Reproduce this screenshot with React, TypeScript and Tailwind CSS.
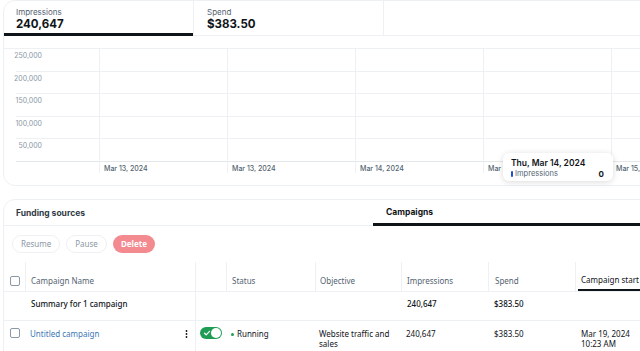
import React from "react";

const yTicks = [
  { y: 55, label: "250,000" },
  { y: 78, label: "200,000" },
  { y: 100, label: "150,000" },
  { y: 123, label: "100,000" },
  { y: 145, label: "50,000" },
];

const hLines = [71, 93, 116, 138];
const vLines = [99.5, 227.5, 355.5, 483.5, 611.5];
const xLabels = ["Mar 13, 2024", "Mar 13, 2024", "Mar 14, 2024", "Mar 14, 2024", "Mar 15, 2024"];

function Chart() {
  return (
    <svg width="700" height="149" viewBox="4 36 700 149" className="block">
      <line x1="4" y1="48.5" x2="704" y2="48.5" stroke="#eef1f3" />
      {hLines.map((y) => (
        <line key={y} x1="16" y1={y + 0.5} x2="704" y2={y + 0.5} stroke="#eef1f3" />
      ))}
      <line x1="16" y1="161.5" x2="704" y2="161.5" stroke="#e3e7ea" />
      {vLines.map((x) => (
        <line key={x} x1={x} y1="48" x2={x} y2="173" stroke="#eef1f3" />
      ))}
      {yTicks.map((t) => (
        <text
          key={t.label}
          x="42"
          y={t.y + 2.5}
          textAnchor="end"
          fontSize="7"
          fill="#8b98a5"
          fontFamily="Inter, sans-serif"
        >
          {t.label}
        </text>
      ))}
      {vLines.map((x, i) => (
        <text
          key={i}
          x={x + 4.5}
          y="171"
          fontSize="7"
          fontWeight="500"
          fill="#536471"
          fontFamily="Inter, sans-serif"
        >
          {xLabels[i]}
        </text>
      ))}
    </svg>
  );
}

function Checkbox() {
  return <span className="block w-[10px] h-[10px] rounded-[2px] border border-[#8b98a5] bg-white" />;
}

function Toggle() {
  return (
    <span className="flex items-center w-[22px] h-[12px] rounded-full bg-[#1f9d55] px-[1px] justify-between">
      <svg width="8" height="8" viewBox="0 0 8 8" className="ml-[2px]">
        <path d="M1.5 4.2 3.2 5.8 6.5 2.3" fill="none" stroke="white" strokeWidth="1.2" strokeLinecap="round" strokeLinejoin="round" />
      </svg>
      <span className="block w-[10px] h-[10px] rounded-full bg-white" />
    </span>
  );
}

function Kebab() {
  return (
    <svg width="3" height="8" viewBox="0 0 3 8">
      <circle cx="1.5" cy="1" r="0.9" fill="#0f1419" />
      <circle cx="1.5" cy="4" r="0.9" fill="#0f1419" />
      <circle cx="1.5" cy="7" r="0.9" fill="#0f1419" />
    </svg>
  );
}

export default function App() {
  return (
    <div
      className="relative w-[640px] h-[351px] overflow-hidden bg-white text-[#0f1419]"
      style={{ fontFamily: "Inter, 'Noto Sans', sans-serif" }}
    >
      {/* metrics + chart card */}
      <div className="ml-[3px] w-[700px] h-[186px] border border-[#eef1f3] rounded-xl">
        <div className="flex h-[35px] border-b border-[#eef1f3]">
          <div className="w-[189px] border-b-[3px] border-[#0f1419] pl-[12px] pt-[6px] -mb-[1px]">
            <div className="text-[8px] leading-[10px] text-[#536471]">Impressions</div>
            <div className="text-[11.5px] leading-[14px] font-bold">240,647</div>
          </div>
          <div className="w-[190px] border-l border-[#eef1f3] pl-[13px] pt-[6px]">
            <div className="text-[8px] leading-[10px] text-[#536471]">Spend</div>
            <div className="text-[11.5px] leading-[14px] font-bold">$383.50</div>
          </div>
          <div className="flex-1 border-l border-[#eef1f3]" />
        </div>
        <Chart />
      </div>

      {/* tooltip */}
      <div className="absolute left-[503px] top-[153px] w-[110px] h-[28px] bg-white rounded-md shadow-[0_1px_6px_rgba(0,0,0,0.15)] px-[8px] pt-[5px]">
        <div className="text-[8.5px] leading-[11px] font-semibold">Thu, Mar 14, 2024</div>
        <div className="flex items-center text-[7.5px] leading-[10px] text-[#536471]">
          <span className="block w-[2px] h-[6px] rounded-full bg-[#1d4ed8] mr-[2px]" />
          <span className="flex-1">Impressions</span>
          <span className="font-bold text-[#0f1419] text-[8px] mr-[1px]">0</span>
        </div>
      </div>

      {/* campaigns card */}
      <div className="mt-[13px] ml-[3px] w-[700px] h-[200px] border border-[#eef1f3] rounded-t-xl">
        <div className="flex h-[26px] border-b border-[#eef1f3]">
          <div className="w-[369px] pl-[12px] pt-[2px] flex items-center text-[8.5px] font-bold text-[#2f3a44]">
            Funding sources
          </div>
          <div className="flex-1 border-b-[3px] border-[#0f1419] -mb-[1px] pl-[13px] pt-[2px] flex items-center text-[8.5px] font-bold">
            Campaigns
          </div>
        </div>

        <div className="flex gap-[6px] pl-[8px] pt-[9px] h-[36px]" style={{ fontFamily: "'Noto Sans', sans-serif" }}>
          <span className="h-[18px] px-[8px] rounded-full border border-[#eef1f3] text-[8px] text-[#8b98a5] flex items-center">Resume</span>
          <span className="h-[18px] px-[8px] rounded-full border border-[#eef1f3] text-[8px] text-[#8b98a5] flex items-center">Pause</span>
          <span className="h-[18px] px-[8px] rounded-full bg-[#f28a90] text-[8px] font-bold text-white flex items-center">Delete</span>
        </div>

        <div className="text-[8px] text-[#0f1419]" style={{ fontFamily: "'Noto Sans', sans-serif" }}>
          <div className="flex h-[30px] border-b border-[#eef1f3] text-[#536471]">
            <div className="w-[21px] flex items-center justify-center pt-[8px]"><Checkbox /></div>
            <div className="w-[170px] border-l border-[#eef1f3] pl-[5px] flex items-center pt-[9px]">Campaign Name</div>
            <div className="w-[31px] border-l border-[#eef1f3]" />
            <div className="w-[89px] border-l border-[#eef1f3] pl-[5px] flex items-center pt-[9px]">Status</div>
            <div className="w-[86px] border-l border-[#eef1f3] pl-[4px] flex items-center pt-[9px]">Objective</div>
            <div className="w-[87px] border-l border-[#eef1f3] pl-[5px] flex items-center pt-[9px]">Impressions</div>
            <div className="w-[87px] border-l border-[#eef1f3] pl-[6px] flex items-center pt-[9px]">Spend</div>
            <div className="flex-1 border-l border-[#eef1f3]">
              <div className="w-[62px] h-full ml-[2px] border-b-[2px] border-[#0f1419] -mb-[1px] pl-[3px] flex items-center pt-[9px] text-[#0f1419]">
                Campaign start
              </div>
            </div>
          </div>

          <div className="flex h-[29px] border-b border-[#eef1f3] font-medium">
            <div className="w-[21px]" />
            <div className="w-[170px] pl-[6px] pt-[6px]">Summary for 1 campaign</div>
            <div className="w-[31px] border-l border-[#eef1f3]" />
            <div className="w-[89px]" />
            <div className="w-[86px]" />
            <div className="w-[87px] pl-[6px] pt-[6px]">240,647</div>
            <div className="w-[87px] pl-[6px] pt-[6px]">$383.50</div>
            <div className="flex-1" />
          </div>

          <div className="flex h-[40px] leading-[10px]">
            <div className="w-[21px] flex justify-center pt-[7px]"><Checkbox /></div>
            <div className="w-[170px] pl-[5px] pr-[7px] pt-[8px] flex justify-between">
              <span className="text-[#3a78b5]">Untitled campaign</span>
              <span className="pt-[1px]"><Kebab /></span>
            </div>
            <div className="w-[31px] border-l border-[#eef1f3] pl-[4px] pt-[6px]"><Toggle /></div>
            <div className="w-[89px] pl-[5px] pt-[8px] flex">
              <span className="w-[3px] h-[3px] rounded-full bg-[#1f9d55] mt-[4px] mr-[3px]" />
              Running
            </div>
            <div className="w-[86px] pl-[4px] pt-[8px]">Website traffic and<br />sales</div>
            <div className="w-[87px] pl-[5px] pt-[8px]">240,647</div>
            <div className="w-[87px] pl-[6px] pt-[8px]">$383.50</div>
            <div className="flex-1 pl-[6px] pt-[8px]">Mar 19, 2024<br />10:23 AM</div>
          </div>
        </div>
      </div>
    </div>
  );
}
